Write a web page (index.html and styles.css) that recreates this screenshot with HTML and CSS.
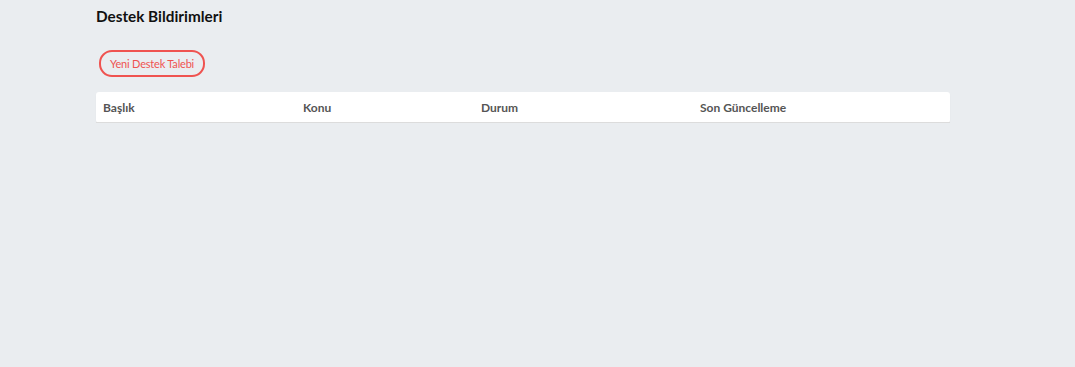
FILE: index.html
```html
<!DOCTYPE html>
<html lang="tr">
<head>
    <meta charset="UTF-8">
    <title>Destek Bildirimleri</title>
    <link rel="stylesheet" href="styles.css">
</head>
<body>
<div class="page">
    <h2 class="page-title">Destek Bildirimleri</h2>
    <div class="actions">
        <button class="new-btn">Yeni Destek Talebi</button>
    </div>
    <table class="tickets">
        <thead>
            <tr>
                <th class="col-title">Başlık</th>
                <th class="col-topic">Konu</th>
                <th class="col-status">Durum</th>
                <th>Son Güncelleme</th>
            </tr>
        </thead>
        <tbody></tbody>
    </table>
</div>
</body>
</html>
```

FILE: styles.css
```css
body {
    font-family: Lato, "Open Sans", sans-serif;
    background-color: #eaedf0;
    margin: 0;
}

.page {
    width: 854px;
    margin-left: 96px;
    padding-top: 7px;
}

.page-title {
    font-size: 15.3px;
    font-weight: 700;
    color: #111;
    margin: 0;
    line-height: 18px;
}

.actions {
    margin-top: 25px;
    padding-left: 3px;
}

.new-btn {
    font-family: inherit;
    font-size: 11px;
    letter-spacing: -0.2px;
    color: #ef5350;
    background: transparent;
    border: 2px solid #ef5350;
    border-radius: 13px;
    height: 27px;
    padding: 0 9px;
    cursor: pointer;
}

.tickets {
    width: 100%;
    margin-top: 15px;
    border-collapse: collapse;
    background: #fff;
    border-radius: 3px;
    box-shadow: 0 1px 1px rgba(0, 0, 0, 0.08);
}

.tickets th {
    text-align: left;
    font-size: 12px;
    font-weight: 700;
    color: #555;
    height: 30px;
    padding: 0 7px;
    border-bottom: 1px solid #dcdcdc;
}

.col-title { width: 186px; }
.col-topic { width: 164px; }
.col-status { width: 205px; }
```
